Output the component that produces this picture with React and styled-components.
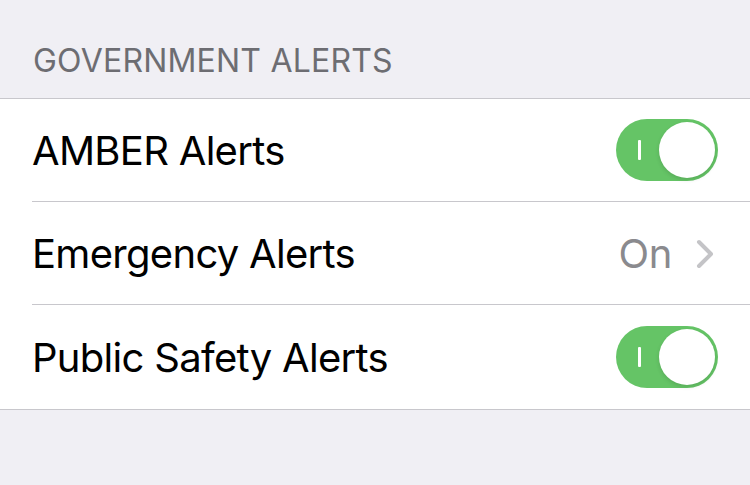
import React from 'react'
import styled, { createGlobalStyle } from 'styled-components'

const GlobalStyle = createGlobalStyle`
  * { box-sizing: border-box; }
  body {
    margin: 0;
    background: #f0eff4;
    font-family: Inter, "Noto Sans", sans-serif;
    -webkit-font-smoothing: antialiased;
  }
`

const Page = styled.div`
  width: 750px;
  height: 485px;
  background: #f0eff4;
  overflow: hidden;
`

const SectionHeader = styled.div`
  height: 98px;
  padding: 42px 0 0 33px;
  font-size: 32px;
  line-height: 38px;
  color: #6d6d72;
  letter-spacing: 0.2px;
`

const Group = styled.div`
  background: #fff;
  border-top: 1px solid #c8c7cc;
  border-bottom: 1px solid #c8c7cc;
`

const Row = styled.div`
  padding-left: 32px;
`

const RowInner = styled.div`
  height: ${p => (p.$last ? '104px' : '103px')};
  display: flex;
  align-items: center;
  justify-content: space-between;
  padding-right: 32px;
  padding-top: 2px;
  border-bottom: ${p => (p.$last ? 'none' : '1px solid #c8c7cc')};
`

const Label = styled.span`
  font-size: 40px;
  line-height: 48px;
  color: #000;
  letter-spacing: -0.7px;
`

const Detail = styled.div`
  display: flex;
  align-items: center;
  gap: 24px;
  padding-right: 4px;
`

const Value = styled.span`
  font-size: 40px;
  line-height: 48px;
  color: #8a8a8e;
  letter-spacing: -0.3px;
`

const Track = styled.div`
  position: relative;
  width: 102px;
  height: 62px;
  margin-top: -2px;
  border-radius: 31px;
  background: ${p => (p.$on ? '#65c466' : '#e9e9ea')};
`

const OnMark = styled.span`
  position: absolute;
  left: 22px;
  top: 21px;
  width: 3px;
  height: 20px;
  background: #fff;
  border-radius: 1px;
`

const Knob = styled.span`
  position: absolute;
  top: 3px;
  left: ${p => (p.$on ? '43px' : '3px')};
  width: 56px;
  height: 56px;
  border-radius: 50%;
  background: #fff;
  box-shadow: 0 2px 4px rgba(0, 0, 0, 0.12);
`

const Toggle = ({ on }) => (
  <Track $on={on}>
    {on && <OnMark />}
    <Knob $on={on} />
  </Track>
)

const Chevron = () => (
  <svg width="18" height="30" viewBox="0 0 18 30">
    <polyline
      points="3,3 15,15 3,27"
      fill="none"
      stroke="#c4c4c7"
      strokeWidth="4"
      strokeLinecap="round"
      strokeLinejoin="round"
    />
  </svg>
)

export default function App() {
  return (
    <Page>
      <GlobalStyle />
      <SectionHeader>GOVERNMENT ALERTS</SectionHeader>
      <Group>
        <Row>
          <RowInner>
            <Label>AMBER Alerts</Label>
            <Toggle on />
          </RowInner>
        </Row>
        <Row>
          <RowInner>
            <Label>Emergency Alerts</Label>
            <Detail>
              <Value>On</Value>
              <Chevron />
            </Detail>
          </RowInner>
        </Row>
        <Row>
          <RowInner $last>
            <Label>Public Safety Alerts</Label>
            <Toggle on />
          </RowInner>
        </Row>
      </Group>
    </Page>
  )
}
